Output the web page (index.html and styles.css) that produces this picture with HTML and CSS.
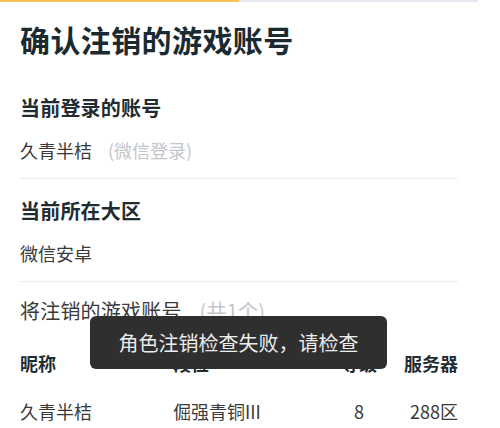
FILE: index.html
```html
<!DOCTYPE html>
<html lang="zh-CN">
<head>
<meta charset="utf-8">
<link rel="stylesheet" href="styles.css">
</head>
<body>
<div class="progress"><div class="progress-fill"></div></div>
<div class="page">
  <h1 class="title">确认注销的游戏账号</h1>
  <div class="section">
    <div class="heading">当前登录的账号</div>
    <div class="value">久青半桔<span class="muted">(微信登录)</span></div>
  </div>
  <div class="section">
    <div class="heading">当前所在大区</div>
    <div class="value">微信安卓</div>
  </div>
  <div class="section last">
    <div class="heading light">将注销的游戏账号<span class="muted big">(共1个)</span></div>
    <div class="table">
      <div class="th">昵称</div>
      <div class="th">段位</div>
      <div class="th center">等级</div>
      <div class="th right">服务器</div>
      <div class="td">久青半桔</div>
      <div class="td">倔强青铜III</div>
      <div class="td center">8</div>
      <div class="td right">288区</div>
    </div>
  </div>
  <div class="toast">角色注销检查失败，请检查</div>
</div>
</body>
</html>
```
FILE: styles.css
```css
html, body {
  margin: 0;
  padding: 0;
  background: #ffffff;
}
body {
  font-family: "Noto Sans CJK SC", "Noto Sans", sans-serif;
  color: #333333;
  width: 500px;
  height: 428px;
  overflow: hidden;
}
.progress {
  width: 478px;
  height: 2px;
  background: #e6e9f0;
}
.progress-fill {
  width: 239px;
  height: 2px;
  background: #f5c25c;
}
.page {
  position: relative;
  width: 438px;
  margin-left: 20px;
  padding-top: 16px;
}
.title {
  margin: 0 0 16px;
  font-size: 30px;
  line-height: 42px;
  font-weight: 700;
  color: #1b2a31;
  letter-spacing: 0.4px;
}
.section {
  padding: 18px 0 14px;
  border-bottom: 1px solid #ebedf0;
}
.section.last {
  border-bottom: none;
  padding-top: 15px;
}
.heading {
  font-size: 20px;
  line-height: 28px;
  font-weight: 700;
  color: #1f2c32;
  margin-bottom: 14px;
  letter-spacing: 0.2px;
}
.heading.light {
  font-weight: 400;
  color: #3a3a3a;
  margin-bottom: 24px;
}
.value {
  font-size: 18px;
  line-height: 28px;
  color: #3a3a3a;
}
.muted {
  color: #c3c6cc;
  margin-left: 16px;
}
.muted.big {
  margin-left: 18px;
}
.table {
  display: grid;
  grid-template-columns: 153px 166px 40px 79px;
  row-gap: 20px;
  font-size: 18px;
  line-height: 28px;
}
.th {
  font-weight: 700;
  color: #1f2c32;
}
.td {
  color: #3a3a3a;
}
.center {
  text-align: center;
}
.right {
  text-align: right;
}
.toast {
  position: absolute;
  left: 70px;
  top: 314px;
  width: 297px;
  height: 53px;
  border-radius: 6px;
  background: #2f2f2f;
  color: #ececec;
  font-size: 20px;
  line-height: 53px;
  text-align: center;
}
```
